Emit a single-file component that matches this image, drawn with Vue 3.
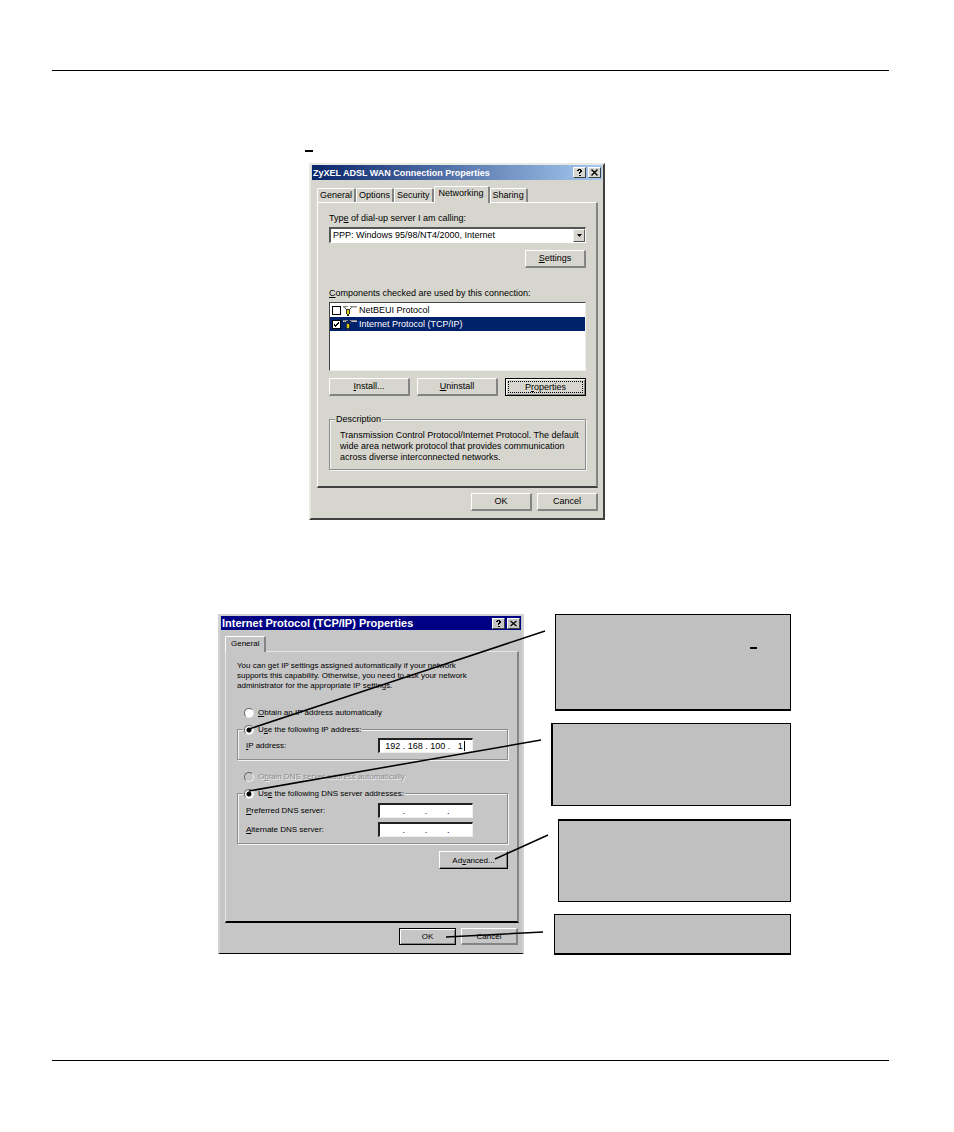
<script setup>
import { ref } from 'vue'

const tabs = ['General', 'Options', 'Security', 'Networking', 'Sharing']
const activeTab = ref('Networking')
const serverType = ref('ppp')
const components = ref([
  { name: 'NetBEUI Protocol', checked: false },
  { name: 'Internet Protocol (TCP/IP)', checked: true },
])
const selected = ref(1)
const addressMode = ref('manual')
const dnsMode = ref('manual')
const address = ref(['192', '168', '100', '1'])
const dnsServers = ref([
  { id: 'preferred', key: 'P', rest: 'referred DNS server:', octets: ['', '', '', ''] },
  { id: 'alternate', key: 'A', rest: 'lternate DNS server:', octets: ['', '', '', ''] },
])
</script>

<template>
  <div class="page">
    <main class="sheet">
      <div class="intro"><span class="mark"></span></div>

      <section class="dialog wan" aria-label="ZyXEL ADSL WAN Connection Properties">
        <header class="titlebar">
          <h2>ZyXEL ADSL WAN Connection Properties</h2>
          <button class="caption" type="button" aria-label="Help">
            <svg viewBox="0 0 7 7"><path d="M1 2V1H2V0H5V1H6V3H5V4H4V5H3V3H4V2H4V1H3V2ZM3 6H5V7H3Z" /></svg>
          </button>
          <button class="caption" type="button" aria-label="Close">
            <svg viewBox="0 0 7 7"><path d="M0.5 0.5L6.5 6.5M6.5 0.5L0.5 6.5" stroke="#000" stroke-width="1.4" /></svg>
          </button>
        </header>
        <div class="tabs" role="tablist">
          <button
            v-for="t in tabs"
            :key="t"
            type="button"
            role="tab"
            class="tab"
            :class="{ active: t === activeTab }"
            :aria-selected="t === activeTab"
            @click="activeTab = t"
          >{{ t }}</button>
        </div>
        <div class="panel">
          <label class="caption-text" for="server">Typ<u>e</u> of dial-up server I am calling:</label>
          <div class="combo">
            <select id="server" v-model="serverType">
              <option value="ppp">PPP: Windows 95/98/NT4/2000, Internet</option>
            </select>
            <span class="drop"><svg viewBox="0 0 5 3"><path d="M0 0H5L2.5 3Z" /></svg></span>
          </div>
          <div class="right settings"><button class="btn" type="button"><u>S</u>ettings</button></div>
          <p class="caption-text"><u>C</u>omponents checked are used by this connection:</p>
          <ul class="list">
            <li v-for="(c, i) in components" :key="c.name" :class="{ chosen: i === selected }" @click="selected = i">
              <label>
                <input v-model="c.checked" type="checkbox" />
                <svg class="net" viewBox="0 0 14 11">
                  <path d="M0 1.5H5M7 1.5H14" stroke="#8a8a8a" />
                  <path d="M0 2.5H3M8 2.5H14" stroke="#c8c8c8" />
                  <path d="M1.5 2.5L4 5M8.5 2.5L6 5" stroke="#444" />
                  <path d="M3 4H7V9H6V11H4V9H3Z" fill="#333" />
                  <path d="M4 5H6V9H4Z" fill="#d8cc10" />
                </svg>
                <span>{{ c.name }}</span>
              </label>
            </li>
          </ul>
          <div class="trio">
            <button class="btn" type="button"><u>I</u>nstall...</button>
            <button class="btn" type="button"><u>U</u>ninstall</button>
            <button class="btn default focused" type="button">P<u>r</u>operties</button>
          </div>
          <fieldset class="description">
            <legend>Description</legend>
            <p>
              Transmission Control Protocol/Internet Protocol. The default<br />
              wide area network protocol that provides communication<br />
              across diverse interconnected networks.
            </p>
          </fieldset>
        </div>
        <footer class="actions">
          <button class="btn" type="button">OK</button>
          <button class="btn" type="button">Cancel</button>
        </footer>
      </section>

      <section class="figure">
        <div class="dialog tcp" aria-label="Internet Protocol (TCP/IP) Properties">
          <header class="titlebar">
            <h2>Internet Protocol (TCP/IP) Properties</h2>
            <button class="caption" type="button" aria-label="Help">
              <svg viewBox="0 0 7 7"><path d="M1 2V1H2V0H5V1H6V3H5V4H4V5H3V3H4V2H4V1H3V2ZM3 6H5V7H3Z" /></svg>
            </button>
            <button class="caption" type="button" aria-label="Close">
              <svg viewBox="0 0 7 7"><path d="M0.5 1L6.5 6M6.5 1L0.5 6" stroke="#000" stroke-width="1.2" /></svg>
            </button>
          </header>
          <div class="tabs" role="tablist">
            <button type="button" role="tab" class="tab active" aria-selected="true">General</button>
          </div>
          <div class="panel">
            <p class="help">
              You can get IP settings assigned automatically if your network<br />
              supports this capability. Otherwise, you need to ask your network<br />
              administrator for the appropriate IP settings.
            </p>
            <label class="radio lone">
              <input v-model="addressMode" type="radio" name="address" value="auto" />
              <span><u>O</u>btain an IP address automatically</span>
            </label>
            <fieldset class="address">
              <legend>
                <label class="radio">
                  <input v-model="addressMode" type="radio" name="address" value="manual" />
                  <span>U<u>s</u>e the following IP address:</span>
                </label>
              </legend>
              <div class="row">
                <label for="ip-0"><u>I</u>P address:</label>
                <div class="ip">
                  <template v-for="(o, i) in address" :key="i">
                    <i v-if="i" class="dot">.</i>
                    <input :id="'ip-' + i" v-model="address[i]" maxlength="3" :aria-label="'IP address part ' + (i + 1)" />
                  </template>
                  <span class="caret"></span>
                </div>
              </div>
            </fieldset>
            <label class="radio off">
              <input v-model="dnsMode" type="radio" name="dns" value="auto" disabled />
              <span>O<u>b</u>tain DNS server address automatically</span>
            </label>
            <fieldset class="dns">
              <legend>
                <label class="radio">
                  <input v-model="dnsMode" type="radio" name="dns" value="manual" />
                  <span>Us<u>e</u> the following DNS server addresses:</span>
                </label>
              </legend>
              <div v-for="s in dnsServers" :key="s.id" class="row">
                <label :for="s.id + '-0'"><u>{{ s.key }}</u>{{ s.rest }}</label>
                <div class="ip">
                  <template v-for="(o, i) in s.octets" :key="i">
                    <i v-if="i" class="dot">.</i>
                    <input :id="s.id + '-' + i" v-model="s.octets[i]" maxlength="3" :aria-label="s.id + ' DNS server part ' + (i + 1)" />
                  </template>
                </div>
              </div>
            </fieldset>
            <div class="right advanced"><button class="btn default" type="button">Ad<u>v</u>anced...</button></div>
          </div>
          <footer class="actions">
            <button class="btn default" type="button">OK</button>
            <button class="btn" type="button">Cancel</button>
          </footer>
        </div>

        <div class="notes">
          <div class="note one"><span class="mark"></span></div>
          <div class="note two"></div>
          <div class="note three"></div>
          <div class="note four"></div>
        </div>

        <svg class="leaders" viewBox="0 0 573 341" aria-hidden="true">
          <path d="M31 115L327 17M31 177L323 126M277 245L330 221M228 323L325 318" />
        </svg>
      </section>
    </main>
  </div>
</template>

<style>
body {
  margin: 0;
  background: #fff;
}
</style>

<style scoped>
* {
  box-sizing: border-box;
}
.page {
  padding: 70px 65px 71px 52px;
  font: 9px/11px "Liberation Sans", Arial, sans-serif;
  color: #000;
}
.sheet {
  border-top: 1px solid #000;
  border-bottom: 1px solid #000;
  padding-bottom: 105px;
}
h2,
p,
ul {
  margin: 0;
  padding: 0;
}
button,
input,
select {
  font: inherit;
  color: inherit;
  margin: 0;
}
.mark {
  display: block;
  width: 8px;
  height: 2px;
  background: #000;
}
.intro {
  padding: 79px 0 11px 253px;
}

/* windows */
.dialog {
  --face: #d6d5ce;
  --shade: #848484;
  --edge: #404040;
  background: var(--face);
  border: 2px solid;
  border-color: #e8e8e4 var(--edge) var(--edge) #e8e8e4;
}
.wan {
  width: 296px;
  margin-left: 257px;
}
.tcp {
  --face: #c6c6c6;
  --edge: #000;
  width: 306px;
  font-size: 8px;
  border-color: #d2d2d2 #d2d2d2 #000 #d2d2d2;
  border-bottom-width: 1px;
}
.titlebar {
  display: flex;
  align-items: center;
  height: 15px;
  margin: 0 1px;
  padding: 0 1px;
  color: #fff;
  background: linear-gradient(90deg, #0a246a, #a6caf0);
}
.titlebar h2 {
  flex: 1;
  font-size: 9px;
  line-height: 14px;
  font-weight: bold;
  white-space: nowrap;
}
.tcp .titlebar {
  height: 14px;
  background: #000084;
}
.tcp .titlebar h2 {
  font-size: 11px;
}
.caption {
  display: flex;
  align-items: center;
  justify-content: center;
  width: 13px;
  height: 11px;
  padding: 0;
  background: var(--face);
  border: 1px solid;
  border-color: #fff #404040 #404040 #fff;
}
.caption + .caption {
  margin-left: 2px;
}
.caption svg {
  width: 7px;
  height: 7px;
}
.tabs {
  display: flex;
  align-items: flex-end;
  margin: 6px 5px 0 6px;
}
.tab {
  height: 14px;
  padding: 0 2px;
  background: var(--face);
  border: solid;
  border-width: 1px 2px 0 1px;
  border-color: #fff var(--shade) #fff #fff;
  border-radius: 2px 2px 0 0;
}
.tab.active {
  position: relative;
  height: 17px;
  margin-bottom: -1px;
  padding: 0 4px 3px;
}
.panel {
  margin: 0 5px 0 6px;
  padding: 10px 10px 16px 11px;
  border: solid;
  border-width: 1px 2px 2px 1px;
  border-color: #fff var(--shade) var(--edge) #fff;
}
.tcp .tabs,
.tcp .panel {
  margin-left: 5px;
  margin-right: 3px;
}
.tcp .tab.active {
  height: 16px;
  padding: 0 5px 3px;
}
.tcp .panel {
  padding: 9px 9px 52px 11px;
  border-color: #e6e6e6 var(--shade) #000 #e6e6e6;
}
.caption-text {
  display: block;
  margin-bottom: 3px;
}
u {
  text-underline-offset: 1px;
}

/* push buttons */
.btn {
  height: 18px;
  padding: 0 2px;
  background: var(--face);
  border: solid;
  border-width: 1px 2px 2px 1px;
  border-color: #fff var(--shade) var(--shade) #fff;
}
.btn.default {
  border-color: #fff #000 #000 #fff;
  border-width: 1px;
  box-shadow: inset -1px -1px 0 var(--shade);
}
.btn.focused,
.actions .btn.default {
  border-color: #000;
  box-shadow: inset 1px 1px 0 #fff, inset -1px -1px 0 var(--shade);
}
.btn.focused {
  outline: 1px dotted #000;
  outline-offset: -4px;
}
.right {
  display: flex;
  justify-content: flex-end;
}
.settings {
  margin: 7px 0 20px;
}
.settings .btn {
  width: 61px;
}
.advanced {
  margin-top: 7px;
}
.advanced .btn {
  width: 69px;
}
.trio {
  display: grid;
  grid-template-columns: repeat(3, 1fr);
  gap: 7px;
  margin: 7px 0 18px;
}
.actions {
  display: flex;
  justify-content: flex-end;
  gap: 5px;
  padding: 5px 5px 7px;
}
.actions .btn {
  width: 61px;
}
.tcp .actions {
  padding: 5px 4px 8px;
}
.tcp .actions .btn {
  width: 57px;
  height: 17px;
}

/* drop-down and list */
.combo {
  position: relative;
  height: 16px;
}
.combo select {
  width: 100%;
  height: 16px;
  padding: 0 16px 0 2px;
  appearance: none;
  background: #fff;
  border: solid;
  border-width: 2px 1px 1px 2px;
  border-color: #555 #fff #fff #555;
  border-radius: 0;
}
.drop {
  position: absolute;
  top: 2px;
  right: 1px;
  display: flex;
  align-items: center;
  justify-content: center;
  width: 12px;
  height: 13px;
  pointer-events: none;
  background: var(--face);
  border: 1px solid;
  border-color: #f4f4f0 #555 #555 #f4f4f0;
}
.drop svg {
  width: 5px;
  height: 3px;
}
.list {
  height: 69px;
  list-style: none;
  background: #fff;
  border: 1px solid;
  border-color: #444 #f0f0ec #f0f0ec #444;
}
.list label {
  display: flex;
  align-items: center;
  height: 14px;
  padding-left: 2px;
}
.list span {
  margin-left: 2px;
}
.chosen {
  color: #fff;
  background: #00216b;
}
.list input {
  width: 9px;
  height: 9px;
  appearance: none;
  background: #fff;
  border: 1px solid #000;
}
.list input:checked {
  background: conic-gradient(#000 0 0) 1px 3px / 1px 2px no-repeat,
    conic-gradient(#000 0 0) 2px 4px / 1px 2px no-repeat,
    conic-gradient(#000 0 0) 3px 3px / 1px 2px no-repeat,
    conic-gradient(#000 0 0) 4px 2px / 1px 2px no-repeat,
    conic-gradient(#000 0 0) 5px 1px / 1px 2px no-repeat, #fff;
}
.net {
  width: 14px;
  height: 11px;
  margin-left: 2px;
  fill: none;
}

/* group boxes */
fieldset {
  min-width: 0;
  margin: 0;
  padding: 0 9px;
  border: 1px solid #8c8c8c;
  box-shadow: 1px 1px 0 #f4f4f4, inset 1px 1px 0 #f4f4f4;
}
legend {
  padding: 0 1px;
  background: var(--face);
}
.description {
  padding: 5px 0 6px 10px;
  white-space: nowrap;
}
.description legend {
  margin-left: -5px;
}
.help {
  line-height: 10px;
  white-space: nowrap;
}
.radio {
  display: flex;
  align-items: center;
  gap: 4px;
  white-space: nowrap;
}
.radio input {
  width: 10px;
  height: 10px;
  appearance: none;
  background: #fff;
  border: 1px solid;
  border-color: #666 #eee #eee #666;
  border-radius: 50%;
}
.radio input:checked {
  background: radial-gradient(circle, #000 2px, #fff 3px);
}
.lone {
  margin: 16px 0 6px 7px;
}
.off {
  margin: 11px 0 6px 7px;
  color: #8c8c8c;
  text-shadow: 1px 1px 0 #eee;
}
.off input {
  background: var(--face);
}
.tcp legend {
  margin-left: -3px;
}
.address {
  padding: 3px 34px 6px 8px;
}
.dns {
  padding: 4px 34px 6px 8px;
}
.row {
  display: flex;
  align-items: center;
  justify-content: space-between;
}
.row + .row {
  margin-top: 4px;
}
.ip {
  display: flex;
  align-items: center;
  width: 95px;
  height: 15px;
  padding: 0 3px;
  font-size: 9px;
  background: #fff;
  border: solid;
  border-width: 2px 1px 1px 2px;
  border-color: #222 #eee #eee #222;
}
.ip input {
  flex: 1;
  width: 0;
  min-width: 0;
  height: 11px;
  padding: 0;
  text-align: center;
  background: none;
  border: 0;
}
.dot {
  width: 3px;
  font-style: normal;
  text-align: center;
}
.caret {
  width: 1px;
  height: 10px;
  margin: 0 4px 0 -6px;
  background: #000;
}

/* annotated figure */
.figure {
  position: relative;
  display: flex;
  justify-content: space-between;
  width: 573px;
  height: 341px;
  margin: 94px 0 0 166px;
}
.figure .tcp {
  align-self: flex-start;
}
.notes {
  display: flex;
  flex-direction: column;
  align-items: flex-end;
  justify-content: space-between;
}
.note {
  height: 83px;
  background: #c0c0c0;
  border: 1px solid #000;
}
.one {
  width: 236px;
  height: 97px;
  padding: 32px 33px 0 0;
  border-bottom-width: 2px;
}
.one .mark {
  width: 7px;
  margin-left: auto;
}
.two {
  width: 240px;
  border-left-width: 2px;
}
.three {
  width: 233px;
  border-top-width: 2px;
}
.four {
  width: 237px;
  height: 41px;
  border-bottom-width: 2px;
}
.leaders {
  position: absolute;
  top: 0;
  left: 0;
  width: 573px;
  height: 341px;
  fill: none;
  stroke: #000;
  stroke-width: 1.5;
  pointer-events: none;
}
</style>
